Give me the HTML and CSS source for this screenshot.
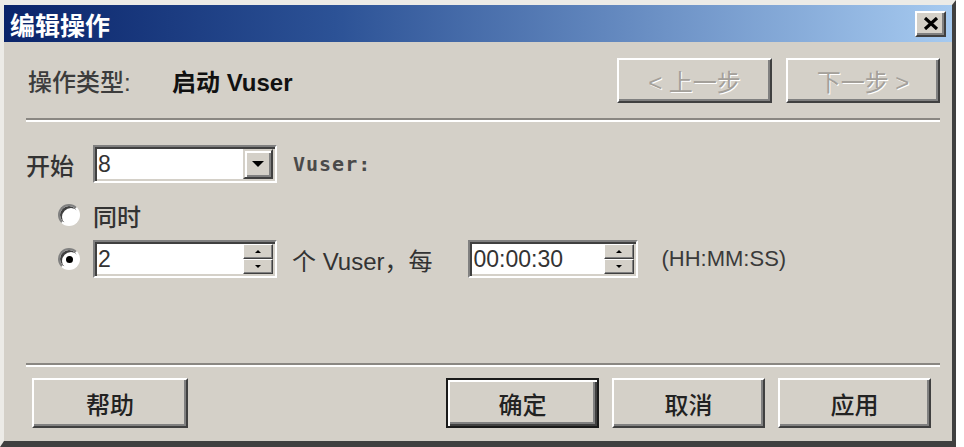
FILE: index.html
```html
<!DOCTYPE html>
<html lang="zh-CN">
<head>
  <meta charset="UTF-8" />
  <title>编辑操作</title>
  <link rel="stylesheet" href="styles.css">
</head>
<body>

  <div class="window">
    <div class="titlebar">
      <div class="title">编辑操作</div>
      <div class="close-btn">
        <svg width="16" height="13" viewBox="0 0 16 13">
          <path d="M2 1 L14 12 M14 1 L2 12" stroke="#000" stroke-width="3.2" />
        </svg>
      </div>
    </div>

    <div class="content">
      <div class="op-row">
        <div class="op-label">操作类型:</div>
        <div class="op-value">启动 Vuser</div>
        <div class="nav-buttons">
          <div class="btn disabled prev">&lt; 上一步</div>
          <div class="btn disabled next">下一步 &gt;</div>
        </div>
      </div>

      <div class="separator"></div>

      <div class="start-row">
        <div class="start-label">开始</div>
        <div class="field combo">
          <span class="field-text">8</span>
          <div class="drop-btn"><span class="arrow-down"></span></div>
        </div>
        <div class="vuser-label">Vuser:</div>
      </div>

      <div class="radio-row first">
        <span class="radio"></span>
        <span class="radio-text">同时</span>
      </div>

      <div class="radio-row second">
        <span class="radio checked"></span>
        <div class="field spin">
          <span class="field-text">2</span>
          <div class="spin-btns">
            <div class="spin-btn"><span class="tiny-up"></span></div>
            <div class="spin-btn"><span class="tiny-down"></span></div>
          </div>
        </div>
        <span class="per-text">个 Vuser，每</span>
        <div class="field spin time">
          <span class="field-text">00:00:30</span>
          <div class="spin-btns">
            <div class="spin-btn"><span class="tiny-up"></span></div>
            <div class="spin-btn"><span class="tiny-down"></span></div>
          </div>
        </div>
        <span class="format-text">(HH:MM:SS)</span>
      </div>

      <div class="separator bottom"></div>

      <div class="button-row">
        <div class="btn help">帮助</div>
        <div class="actions">
          <div class="btn default">确定</div>
          <div class="btn">取消</div>
          <div class="btn">应用</div>
        </div>
      </div>
    </div>
  </div>

</body>
</html>
```

FILE: styles.css
```css
body {
  margin: 0;
  background: #fff;
  font-family: "Liberation Sans", "Noto Sans CJK SC", sans-serif;
  color: #2a2a2a;
}

.window {
  box-sizing: border-box;
  width: 956px;
  height: 447px;
  background: #d4d0c8;
  border-top: 5px solid #ecebe7;
  border-left: 4px solid #ecebe7;
  border-right: 4px solid #404040;
  border-bottom: 6px solid #404040;
  display: flex;
  flex-direction: column;
}

/* title bar */
.titlebar {
  height: 37px;
  display: flex;
  align-items: center;
  justify-content: space-between;
  padding-left: 6px;
  background: linear-gradient(to right, #0a246a, #2c5296 35%, #a6caf0);
}

.title {
  color: #fff;
  font-size: 25px;
  font-weight: bold;
}

.close-btn {
  box-sizing: border-box;
  width: 31px;
  height: 26px;
  margin-right: 6px;
  background: #d4d0c8;
  border: 2px solid;
  border-color: #fff #404040 #404040 #fff;
  box-shadow: inset -2px -2px 0 #808080;
  display: flex;
  align-items: center;
  justify-content: center;
}

.content {
  padding: 0 12px 0 22px;
}

/* top row */
.op-row {
  margin-top: 16px;
  height: 45px;
  display: flex;
  align-items: center;
}

.op-label {
  width: 144px;
  margin-left: 2px;
  font-size: 24px;
  font-weight: 500;
  color: #3c3c3c;
}

.op-value {
  font-size: 24px;
  font-weight: bold;
  color: #111;
}

.nav-buttons {
  margin-left: auto;
  display: flex;
  gap: 14px;
  height: 45px;
}

.btn {
  box-sizing: border-box;
  height: 100%;
  width: 153px;
  background: #d4d0c8;
  border: 2px solid;
  border-color: #fff #404040 #404040 #fff;
  box-shadow: inset -2px -2px 0 #808080;
  display: flex;
  align-items: center;
  justify-content: center;
  font-size: 24px;
  font-weight: 500;
  color: #222;
}

.btn.prev {
  width: 155px;
}

.btn.next {
  width: 154px;
}

.btn.disabled {
  font-weight: normal;
  color: #a4a09a;
  text-shadow: 1px 1px 0 #fff;
}

.btn.default {
  border: 2px solid #1a1a1a;
  box-shadow: inset 2px 2px 0 #fff, inset -2px -2px 0 #404040, inset -4px -4px 0 #808080;
}

/* etched separator */
.separator {
  margin-top: 15px;
  height: 2px;
  background: #8a8782;
  border-bottom: 2px solid #fff;
}

.separator.bottom {
  margin-top: 85px;
}

/* start row */
.start-row {
  margin-top: 23px;
  height: 38px;
  display: flex;
  align-items: center;
}

.start-label {
  width: 67px;
  font-size: 24px;
  font-weight: 500;
  color: #333;
}

.field {
  box-sizing: border-box;
  height: 38px;
  width: 184px;
  background: #fff;
  border: 2px solid;
  border-color: #808080 #fff #fff #808080;
  box-shadow: inset 2px 2px 0 #404040, inset -2px -2px 0 #d4d0c8;
  display: flex;
  align-items: stretch;
  padding: 2px;
}

.field-text {
  flex: 1;
  display: flex;
  align-items: center;
  padding-left: 1px;
  font-size: 23px;
  color: #333;
}

.drop-btn {
  box-sizing: border-box;
  width: 30px;
  background: #d4d0c8;
  border: 2px solid;
  border-color: #d4d0c8 #404040 #404040 #d4d0c8;
  box-shadow: inset 2px 2px 0 #fff, inset -2px -2px 0 #808080;
  display: flex;
  align-items: center;
  justify-content: center;
}

.arrow-down {
  width: 0;
  height: 0;
  border-left: 6px solid transparent;
  border-right: 6px solid transparent;
  border-top: 6px solid #000;
}

.vuser-label {
  margin-left: 16px;
  font-family: "DejaVu Sans Mono", monospace;
  font-weight: bold;
  font-size: 20px;
  letter-spacing: 1px;
  color: #4a4a4a;
}

/* radio rows */
.radio-row {
  display: flex;
  align-items: center;
  padding-left: 32px;
}

.radio-row.first {
  margin-top: 17px;
  height: 30px;
}

.radio-row.second {
  margin-top: 10px;
  height: 38px;
}

.radio {
  box-sizing: border-box;
  width: 22px;
  height: 22px;
  margin-right: 13px;
  border-radius: 50%;
  background: #fff;
  border: 2px solid;
  border-color: #808080 #fff #fff #808080;
  box-shadow: inset 2px 2px 0 #404040;
  display: flex;
  align-items: center;
  justify-content: center;
}

.radio.checked::after {
  content: "";
  width: 7px;
  height: 7px;
  border-radius: 50%;
  background: #000;
  margin: 1px 0 0 1px;
}

.radio-text {
  font-size: 24px;
  font-weight: 500;
  color: #333;
}

.spin-btns {
  width: 30px;
  display: flex;
  flex-direction: column;
}

.spin-btn {
  box-sizing: border-box;
  flex: 1;
  background: #d4d0c8;
  border: 1px solid;
  border-color: #fff #404040 #404040 #fff;
  box-shadow: inset -1px -1px 0 #808080;
  display: flex;
  align-items: center;
  justify-content: center;
}

.tiny-up {
  width: 0;
  height: 0;
  border-left: 3px solid transparent;
  border-right: 3px solid transparent;
  border-bottom: 3px solid #000;
}

.tiny-down {
  width: 0;
  height: 0;
  border-left: 3px solid transparent;
  border-right: 3px solid transparent;
  border-top: 3px solid #000;
}

.per-text {
  margin-left: 15px;
  font-size: 24px;
  color: #333;
}

.field.time {
  width: 170px;
  margin-left: 36px;
}

.format-text {
  margin-left: 23px;
  font-size: 22px;
  color: #3a3a3a;
}

/* bottom buttons */
.button-row {
  margin-top: 11px;
  height: 50px;
  display: flex;
}

.btn.help {
  width: 156px;
  margin-left: 6px;
}

.actions {
  margin-left: auto;
  margin-right: 9px;
  display: flex;
  gap: 13px;
}
```
